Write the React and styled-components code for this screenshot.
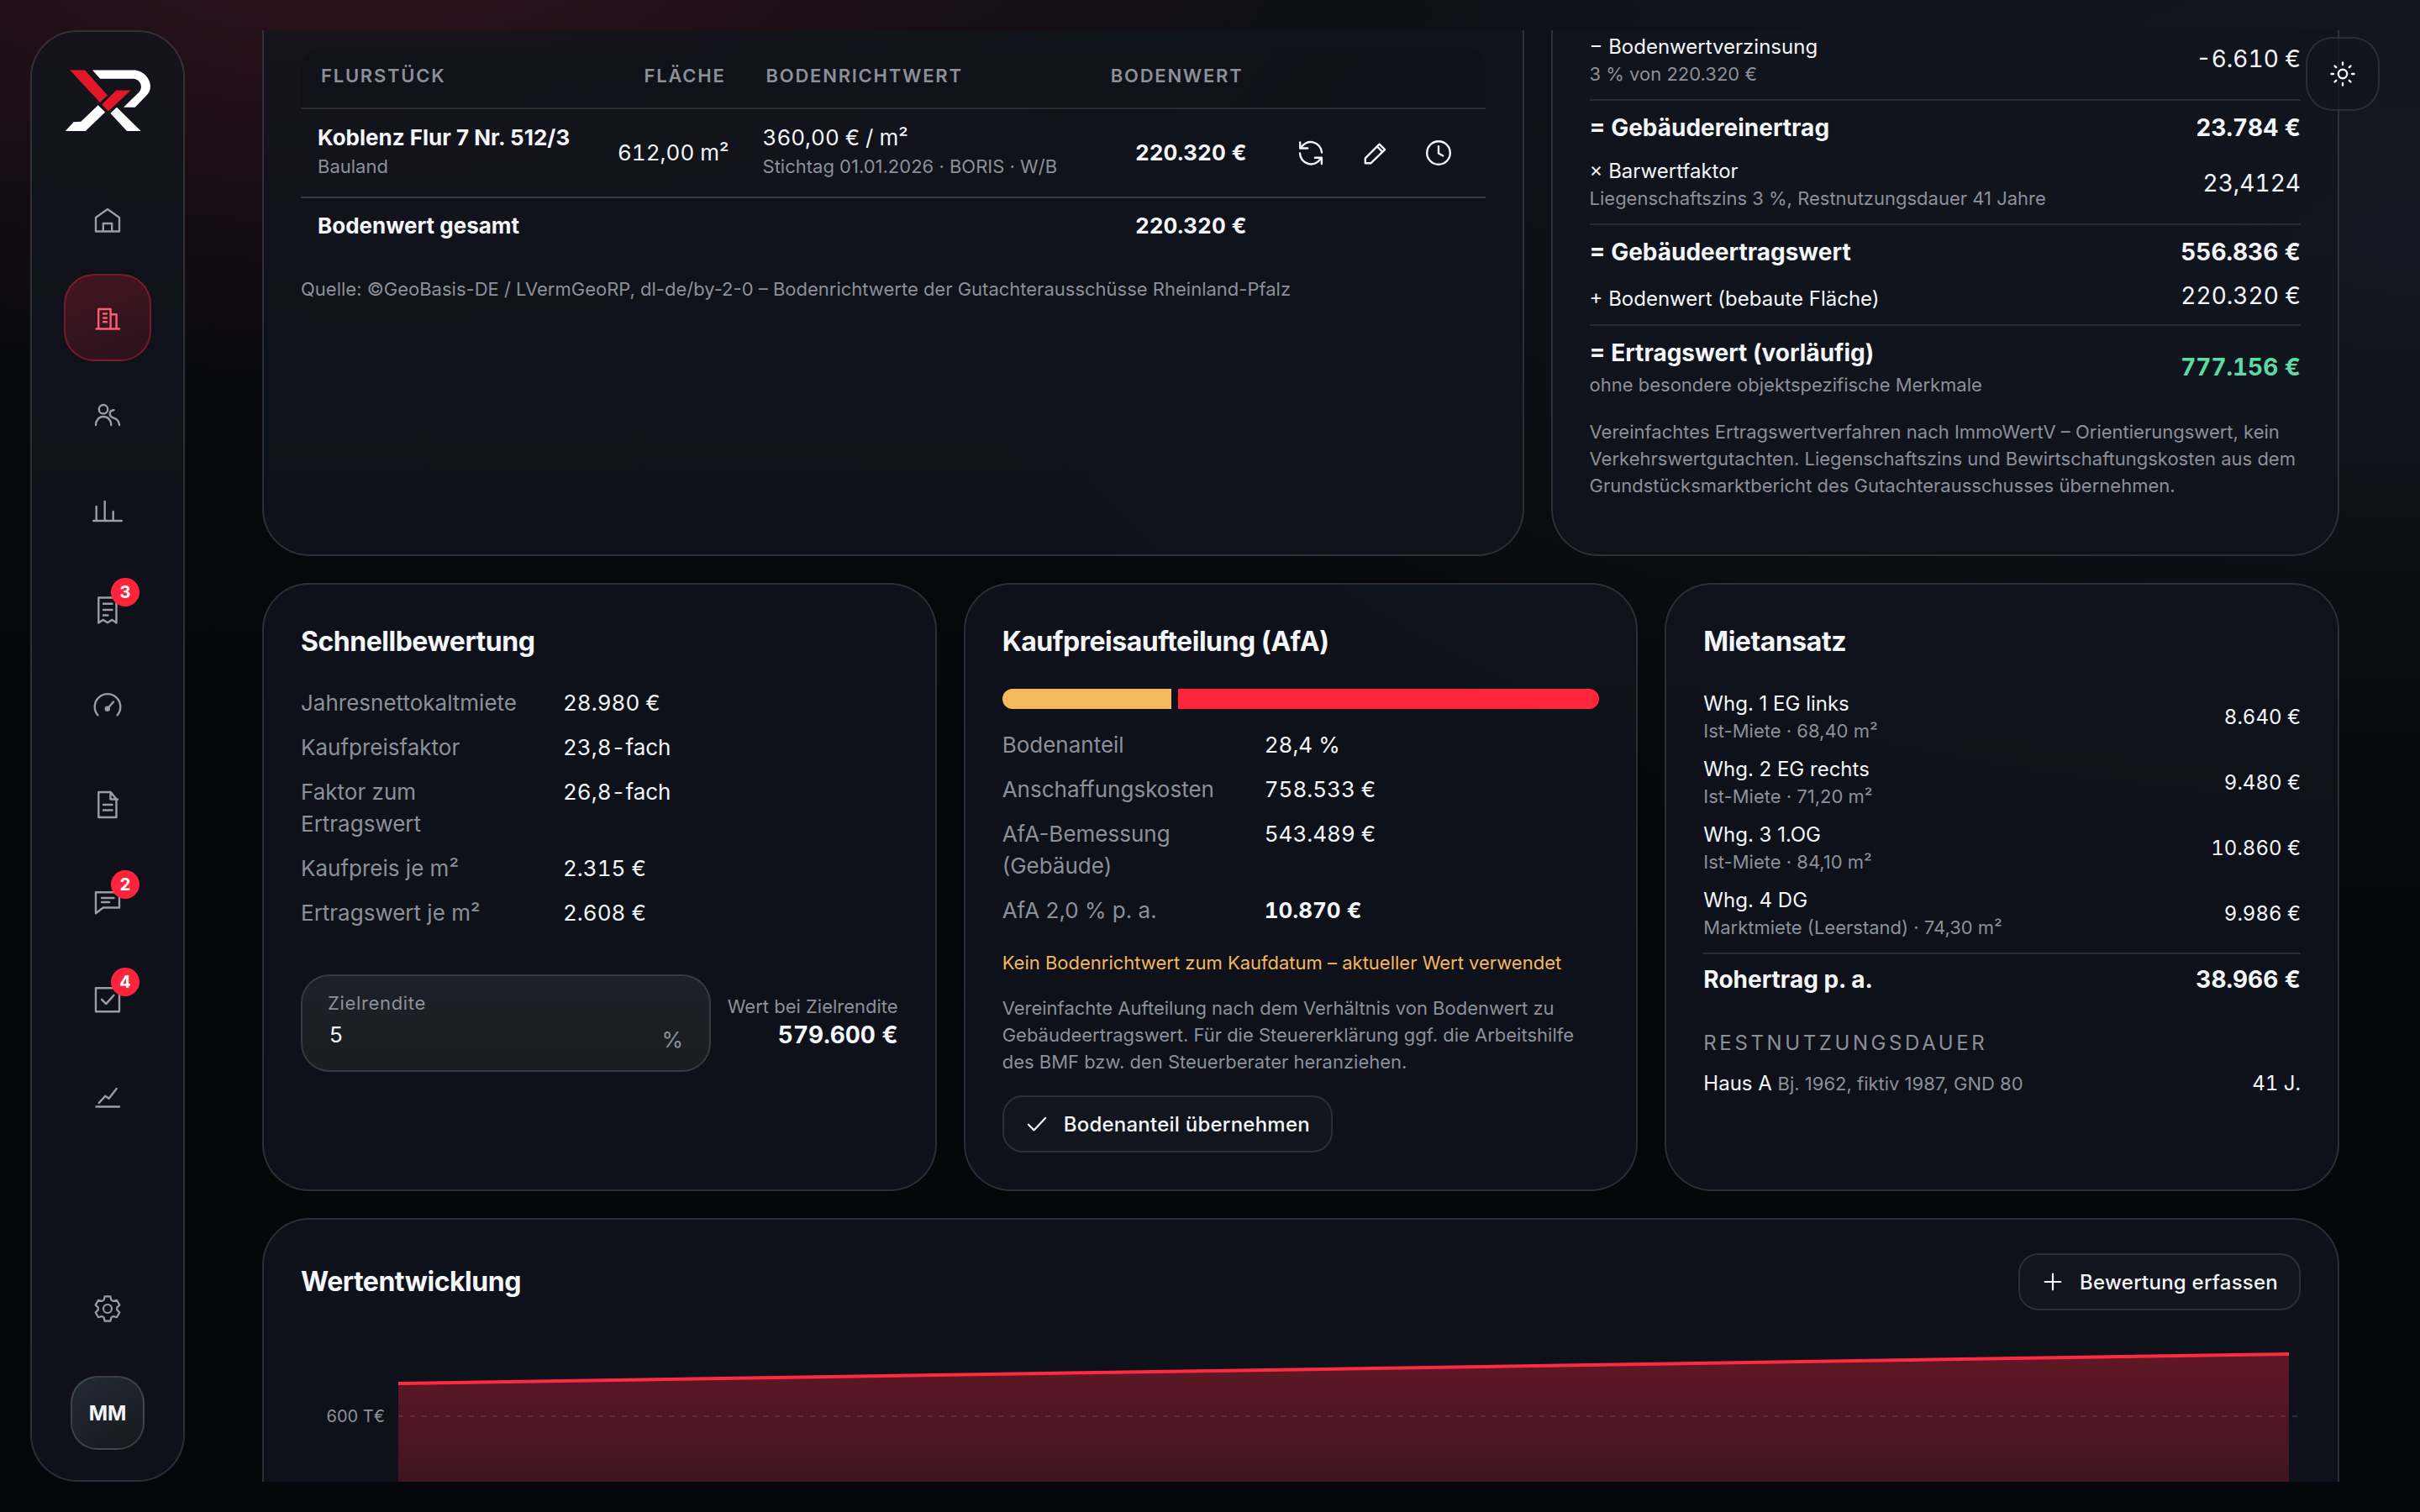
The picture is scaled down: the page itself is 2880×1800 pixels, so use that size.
import React, { useState } from 'react';
import styled, { createGlobalStyle, css } from 'styled-components';

const GlobalStyle = createGlobalStyle`
    * {
        box-sizing: border-box;
    }

    body {
        margin: 0;
        color: #f5f6fa;
        font-family: Inter, 'Liberation Sans', sans-serif;
        font-size: 26px;
        background:
            radial-gradient(42% 30% at 15% -4%, rgba(255, 40, 70, 0.15), transparent),
            radial-gradient(62% 46% at 100% 16%, rgba(96, 116, 160, 0.12), transparent),
            linear-gradient(#0a0d13, #050609 50%, #06070a);
    }

    button, input {
        font-family: inherit;
        color: inherit;
    }
`;

const Shell = styled.div`
    display: flex;
    gap: 92px;
    height: 100vh;
    padding: 36px;
    overflow: hidden;
`;

/* ---------- sidebar ---------- */

const Sidebar = styled.aside`
    display: flex;
    flex-direction: column;
    align-items: center;
    flex: none;
    width: 184px;
    padding: 44px 0 36px;
    border: 2px solid rgba(255, 255, 255, 0.13);
    border-radius: 56px;
    background: rgba(17, 21, 30, 0.78);
`;

const Logo = styled.a`
    display: block;
    height: 76px;
    margin-bottom: 52px;
`;

const Nav = styled.nav`
    display: flex;
    flex-direction: column;
    flex: 1;
    gap: 12px;
`;

const NavLink = styled.a`
    position: relative;
    display: flex;
    align-items: center;
    justify-content: center;
    width: 104px;
    height: 104px;
    border: 2px solid transparent;
    border-radius: 36px;
    color: #9a9da6;

    ${({ $active }) => $active && css`
        color: #ff5c72;
        border-color: rgba(255, 36, 60, 0.34);
        background: linear-gradient(160deg, rgba(255, 36, 60, 0.22), rgba(255, 36, 60, 0.11));
    `}
`;

const Badge = styled.span`
    position: absolute;
    top: 12px;
    right: 12px;
    display: flex;
    align-items: center;
    justify-content: center;
    width: 34px;
    height: 34px;
    border-radius: 50%;
    background: #ff243c;
    color: #fff;
    font-size: 20px;
    font-weight: 700;
    line-height: 34px;
`;

const Avatar = styled.button`
    width: 88px;
    height: 88px;
    margin-top: 28px;
    padding: 0;
    border: 2px solid rgba(255, 255, 255, 0.15);
    border-radius: 32px;
    background: linear-gradient(150deg, #232a35, #16181d);
    font-size: 24px;
    font-weight: 700;
`;

/* ---------- content ---------- */

const Viewport = styled.main`
    flex: 1;
    min-width: 0;
    margin-right: 60px;
    overflow: hidden;
`;

const Content = styled.div`
    display: flex;
    flex-direction: column;
    gap: 32px;
    margin-top: -52px;
`;

const Row = styled.div`
    display: grid;
    grid-template-columns: ${({ $columns }) => $columns};
    gap: 32px;
`;

const Card = styled.section`
    min-width: 0;
    padding: 44px;
    border: 2px solid rgba(255, 255, 255, 0.12);
    border-radius: 56px;
    background: rgba(17, 21, 30, 0.78);
`;

const CardHead = styled.div`
    display: flex;
    align-items: center;
    justify-content: space-between;
    height: 60px;
`;

const Title = styled.h2`
    margin: 0;
    font-size: 32px;
    font-weight: 700;
    line-height: 44px;
    letter-spacing: -0.015em;
`;

const CardTitle = styled(Title)`
    padding-top: 2px;
    margin-bottom: 32px;
`;

const Note = styled.p`
    margin: ${({ $margin }) => $margin || '0'};
    color: ${({ $warn }) => ($warn ? '#f5b85c' : '#8c9099')};
    font-size: 22px;
    line-height: 32px;
`;

const OutlineButton = styled.button`
    display: inline-flex;
    align-items: center;
    gap: 18px;
    height: 68px;
    padding: 0 25px;
    border: 2px solid rgba(255, 255, 255, 0.11);
    border-radius: 24px;
    background: rgba(255, 255, 255, 0.02);
    font-size: 24px;
    font-weight: 500;
    letter-spacing: 0.01em;
    white-space: nowrap;
`;

const ThemeButton = styled.button`
    position: fixed;
    top: 44px;
    right: 48px;
    display: flex;
    align-items: center;
    justify-content: center;
    width: 88px;
    height: 88px;
    padding: 0;
    border: 2px solid rgba(255, 255, 255, 0.11);
    border-radius: 32px;
    background: rgba(17, 20, 28, 0.7);
`;

/* ---------- land table ---------- */

const Table = styled.table`
    width: 100%;
    margin-top: 26px;
    border-collapse: separate;
    border-spacing: 0;
    table-layout: fixed;
`;

const Th = styled.th`
    height: 74px;
    padding: 0 24px 4px;
    border-bottom: 2px solid #2a2c34;
    background: rgba(16, 17, 25, 0.75);
    color: #8c9099;
    font-size: 22px;
    font-weight: 600;
    letter-spacing: 0.08em;
    text-align: ${({ $right }) => ($right ? 'right' : 'left')};
    text-transform: uppercase;

    &:first-child {
        border-top-left-radius: 28px;
    }

    &:last-child {
        border-top-right-radius: 28px;
    }
`;

const Td = styled.td`
    height: ${({ $total }) => ($total ? '66px' : '106px')};
    padding: 0 20px;
    border-bottom: ${({ $total }) => ($total ? '0' : '2px solid #3a3c45')};
    font-weight: ${({ $bold }) => ($bold ? 700 : 400)};
    font-variant-numeric: ${({ $text }) => ($text ? 'normal' : 'tabular-nums')};
    line-height: 32px;
    text-align: ${({ $right }) => ($right ? 'right' : 'left')};
    white-space: nowrap;
`;

const TdSub = styled.div`
    color: #8c9099;
    font-size: 22px;
    font-weight: 400;
    font-variant-numeric: normal;
    line-height: 36px;
`;

const Actions = styled.div`
    display: flex;
    justify-content: flex-end;
    gap: 4px;
`;

const IconButton = styled.button`
    display: flex;
    align-items: center;
    justify-content: center;
    width: 72px;
    height: 64px;
    padding: 0;
    border: 0;
    background: none;
`;

/* ---------- calculation rows ---------- */

const Calc = styled.div`
    display: flex;
    align-items: center;
    justify-content: space-between;
    padding: ${({ $compact }) => ($compact ? '4px 0 10px' : '10px 0 14px')};
    font-size: 24px;
    line-height: 32px;
`;

const CalcSum = styled(Calc)`
    margin-top: ${({ $compact }) => ($compact ? 4 : 0)}px;
    padding: ${({ $compact }) => ($compact ? 14 : 16)}px 0 10px;
    border-top: 2px solid #292c33;
    font-size: 28px;
    font-weight: 700;
`;

const CalcLabel = styled.div`
    padding: ${({ $single }) => ($single ? '4px 0 0' : '0')};
`;

const CalcSub = styled.div`
    margin-top: ${({ $gap }) => $gap || 0}px;
    color: #8c9099;
    font-size: 22px;
    font-weight: 400;
`;

const CalcValue = styled.span`
    padding-bottom: ${({ $compact }) => ($compact ? 0 : 4)}px;
    color: ${({ $good }) => ($good ? '#5cdca5' : 'inherit')};
    font-size: ${({ $compact }) => ($compact ? 'inherit' : '28px')};
    font-variant-numeric: tabular-nums;
    white-space: nowrap;
`;

const Overline = styled.h3`
    margin: 34px 0 12px;
    color: #8c9099;
    font-size: 24px;
    font-weight: 400;
    line-height: 32px;
    letter-spacing: 0.15em;
    text-transform: uppercase;
`;

const Muted = styled.span`
    color: #8c9099;
    font-size: 22px;
`;

/* ---------- key figures ---------- */

const Facts = styled.dl`
    display: grid;
    grid-template-columns: 280px 1fr;
    gap: 15px 32px;
    margin: 0;
    line-height: 38px;

    dt {
        color: #8c9099;
    }

    dd {
        margin: 0;
        font-variant-numeric: tabular-nums;
    }
`;

const Yield = styled.div`
    display: flex;
    align-items: center;
    gap: 20px;
    margin-top: 54px;
`;

const Field = styled.label`
    display: grid;
    grid-template-columns: 1fr auto;
    flex: 1;
    min-width: 0;
    height: 116px;
    padding: 16px 30px;
    border: 2px solid rgba(255, 255, 255, 0.12);
    border-radius: 34px;
    background: linear-gradient(#1d2029, #1b1d21);
    color: #8c9099;
    font-size: 22px;
    line-height: 32px;
    letter-spacing: 0.03em;
`;

const FieldInput = styled.input`
    grid-row: 2;
    width: 100%;
    height: 34px;
    padding: 0 2px;
    border: 0;
    outline: 0;
    background: none;
    color: #f5f6fa;
    font-size: 26px;
`;

const FieldUnit = styled.span`
    grid-row: 2;
    padding-top: 8px;
    font-size: 26px;
`;

const YieldResult = styled.div`
    padding-bottom: 4px;
    color: #8c9099;
    font-size: 22px;
    line-height: 32px;
    text-align: right;
    white-space: nowrap;

    strong {
        display: block;
        color: #f5f6fa;
        font-size: 28px;
        line-height: 36px;
        font-variant-numeric: tabular-nums;
    }
`;

const Split = styled.div`
    display: flex;
    gap: 8px;
    height: 24px;
    margin: 34px 0 24px;
    border-radius: 12px;
    overflow: hidden;
`;

const SplitLand = styled.div`
    background: #f5b85c;
`;

const SplitBuilding = styled.div`
    flex: 1;
    background: #ff263c;
`;

/* ---------- chart ---------- */

const Chart = styled.div`
    display: flex;
    height: 320px;
    margin-top: 40px;
`;

const Axis = styled.div`
    width: 116px;
    padding: 78px 16px 0 0;
    color: #8c9099;
    font-size: 20px;
    line-height: 24px;
    text-align: right;
`;

const Plot = styled.svg`
    flex: 1;
    min-width: 0;
    height: 320px;
`;

const Icon = ({ size = 36, width = 2.4, children }) => (
    <svg
        width={size}
        height={size}
        viewBox="0 0 36 36"
        fill="none"
        stroke="currentColor"
        strokeWidth={width}
        strokeLinecap="round"
        strokeLinejoin="round"
        aria-hidden="true"
    >
        {children}
    </svg>
);

const navItems = [
    { label: 'Start', icon: <path d="M4 31.5V15L18 5l14 10v16.500zM12.800 31.500V22h10.400v9.500" /> },
    {
        label: 'Objekte',
        active: true,
        icon: <path d="M4.500 31.500h27.500M7.200 31.500V8h14.400v23.500M21.600 14.300h7v17.200M13 13.500h4M13 18.500h4M13 23.300h4" />,
    },
    {
        label: 'Mieter',
        icon: (
            <>
                <circle cx="13" cy="11.200" r="5.200" />
                <path d="M4 30c0-5.800 3.900-10 9.100-10s9.200 4.200 9.200 10M25.600 12.200c-3 .2-4.900 2-4.900 4.300 0 2.500 2 4.300 4.700 5.100 3.800 1 6.200 4 6.700 8.400" />
            </>
        ),
    },
    { label: 'Berichte', icon: <path d="M1.200 28h33.600M4.700 28V11M14.700 28V5M24.700 28V17" /> },
    {
        label: 'Rechnungen',
        badge: 3,
        icon: <path d="M7.300 3.500h21.200v30l-5-3.600-5.500 3.300-5.500-3.300-5.200 3.600zM13 10.800h10.500M13 18h10.500M13 24.500h5.500" />,
    },
    {
        label: 'Zähler',
        icon: (
            <>
                <path d="M6.300 27.300a15.300 15.300 0 1 1 23.400 0M25 11.500l-7 8" />
                <circle cx="17.800" cy="19.800" r="2" fill="currentColor" />
            </>
        ),
    },
    { label: 'Dokumente', icon: <path d="M7.300 3h14.500l6.700 8.500V33H7.300zM21.500 3.500v8H30M13 18h10.500M13 24.500h10.500" /> },
    { label: 'Nachrichten', badge: 2, icon: <path d="M4 6.200h28v18.300H12.800L4 31.300zM11 13h14.500M11 18h9" /> },
    { label: 'Aufgaben', badge: 4, icon: <path d="M4 4.200h28v28H4zM11 17.800l5.300 5.300 9.200-10.300" /> },
    { label: 'Wertentwicklung', icon: <path d="M4.500 29.500h27.500M7.800 25l7.500-8.300 4.300 3L28.700 8" /> },
];

const facts = [
    ['Jahresnettokaltmiete', '28.980 €'],
    ['Kaufpreisfaktor', '23,8-fach'],
    ['Faktor zum Ertragswert', '26,8-fach'],
    ['Kaufpreis je m²', '2.315 €'],
    ['Ertragswert je m²', '2.608 €'],
];

const rents = [
    ['Whg. 1 EG links', 'Ist-Miete · 68,40 m²', '8.640 €'],
    ['Whg. 2 EG rechts', 'Ist-Miete · 71,20 m²', '9.480 €'],
    ['Whg. 3 1.OG', 'Ist-Miete · 84,10 m²', '10.860 €'],
    ['Whg. 4 DG', 'Marktmiete (Leerstand) · 74,30 m²', '9.986 €'],
];

const SidebarNav = () => (
    <Sidebar>
        <Logo href="#" aria-label="XR">
            <svg width="104" height="76" viewBox="0 0 104 76" aria-hidden="true">
                <g fill="#e31827">
                    <path d="M7.300 1.400H25l27 30.100-9 8.400z" />
                    <path d="M62.300 25.500h17.400L53 50.500l-7.700-8.300z" />
                </g>
                <g fill="#fff">
                    <path d="M34 1.400h49.300c10 0 19.700 9.200 19.700 19.400 0 5-2 8.400-5.500 11.700L84.700 45.700H71l18.400-18c5.600-5.800 1.600-16-7.400-16H43.200z" />
                    <path d="M40.700 43.300l8.500 8.300L25.700 74h-24l10-10.800 8.600-.4z" />
                    <path d="M63 45.700L91.700 74H75L55.300 52.800z" />
                </g>
            </svg>
        </Logo>
        <Nav>
            {navItems.map((item) => (
                <NavLink href="#" key={item.label} aria-label={item.label} $active={item.active}>
                    <Icon>{item.icon}</Icon>
                    {item.badge && <Badge>{item.badge}</Badge>}
                </NavLink>
            ))}
        </Nav>
        <NavLink href="#" aria-label="Einstellungen">
            <Icon width={2.2}>
                <path
                    transform="translate(18 18)"
                    d="M-3.400-14.600H3.400L4.400-10.400 6.800-9 10.900-10.200 14.300-4.400 11.200-1.400V1.400L14.300 4.400 10.900 10.200 6.800 9 4.400 10.400 3.400 14.600H-3.400L-4.400 10.400-6.800 9-10.900 10.200-14.300 4.400-11.200 1.400V-1.400L-14.300-4.400-10.900-10.200-6.800-9-4.400-10.400z"
                />
                <circle cx="18" cy="18" r="5" />
            </Icon>
        </NavLink>
        <Avatar>MM</Avatar>
    </Sidebar>
);

const LandCard = () => (
    <Card>
        <Table>
            <colgroup>
                <col />
                <col width="180" />
                <col width="338" />
                <col width="278" />
                <col width="264" />
            </colgroup>
            <thead>
                <tr>
                    <Th>Flurstück</Th>
                    <Th $right>Fläche</Th>
                    <Th>Bodenrichtwert</Th>
                    <Th $right>Bodenwert</Th>
                    <Th as="td" />
                </tr>
            </thead>
            <tbody>
                <tr>
                    <Td $bold $text>
                        Koblenz Flur 7 Nr. 512/3
                        <TdSub>Bauland</TdSub>
                    </Td>
                    <Td $right>612,00 m²</Td>
                    <Td>
                        360,00 € / m²
                        <TdSub>Stichtag 01.01.2026 · BORIS · W/B</TdSub>
                    </Td>
                    <Td $bold $right>220.320 €</Td>
                    <Td>
                        <Actions>
                            <IconButton aria-label="Aktualisieren">
                                <Icon>
                                    <path d="M5.200 5.500v7h9M6.200 12A13.200 13.200 0 0 1 31 17.500M30.900 31v-7.200h-8M5 18.500A13.200 13.200 0 0 0 29.800 24.500" />
                                </Icon>
                            </IconButton>
                            <IconButton aria-label="Bearbeiten">
                                <Icon>
                                    <path d="M6.800 30.300v-6L23.600 7.700l6.500 6.500L13.300 30.300zM21 10.500l6.300 6.300" />
                                </Icon>
                            </IconButton>
                            <IconButton aria-label="Verlauf">
                                <Icon>
                                    <circle cx="18" cy="18" r="13.800" />
                                    <path d="M18 10.200v8.300l5.300 3" />
                                </Icon>
                            </IconButton>
                        </Actions>
                    </Td>
                </tr>
            </tbody>
            <tfoot>
                <tr>
                    <Td $total $bold $text colSpan={3}>Bodenwert gesamt</Td>
                    <Td $total $bold $right>220.320 €</Td>
                    <Td $total />
                </tr>
            </tfoot>
        </Table>
        <Note $margin="26px 0 0">
            Quelle: ©GeoBasis-DE / LVermGeoRP, dl-de/by-2-0 – Bodenrichtwerte der Gutachterausschüsse Rheinland-Pfalz
        </Note>
    </Card>
);

const IncomeCard = () => (
    <Card>
        <Calc>
            <CalcLabel>
                − Bodenwertverzinsung
                <CalcSub>3 % von 220.320 €</CalcSub>
            </CalcLabel>
            <CalcValue>-6.610 €</CalcValue>
        </Calc>
        <CalcSum>
            <span>= Gebäudereinertrag</span>
            <CalcValue $compact>23.784 €</CalcValue>
        </CalcSum>
        <Calc>
            <CalcLabel>
                × Barwertfaktor
                <CalcSub>Liegenschaftszins 3 %, Restnutzungsdauer 41 Jahre</CalcSub>
            </CalcLabel>
            <CalcValue>23,4124</CalcValue>
        </Calc>
        <CalcSum>
            <span>= Gebäudeertragswert</span>
            <CalcValue $compact>556.836 €</CalcValue>
        </CalcSum>
        <Calc>
            <CalcLabel $single>+ Bodenwert (bebaute Fläche)</CalcLabel>
            <CalcValue>220.320 €</CalcValue>
        </Calc>
        <CalcSum>
            <CalcLabel>
                = Ertragswert (vorläufig)
                <CalcSub $gap={6}>ohne besondere objektspezifische Merkmale</CalcSub>
            </CalcLabel>
            <CalcValue $good>777.156 €</CalcValue>
        </CalcSum>
        <Note $margin="14px 0 22px">
            Vereinfachtes Ertragswertverfahren nach ImmoWertV – Orientierungswert, kein Verkehrswertgutachten.
            Liegenschaftszins und Bewirtschaftungskosten aus dem Grundstücksmarktbericht des Gutachterausschusses
            übernehmen.
        </Note>
    </Card>
);

const QuickCard = () => {
    const [target, setTarget] = useState('5');

    return (
        <Card>
            <CardTitle>Schnellbewertung</CardTitle>
            <Facts>
                {facts.map(([label, value]) => (
                    <React.Fragment key={label}>
                        <dt>{label}</dt>
                        <dd>{value}</dd>
                    </React.Fragment>
                ))}
            </Facts>
            <Yield>
                <Field>
                    Zielrendite
                    <FieldInput value={target} onChange={(e) => setTarget(e.target.value)} />
                    <FieldUnit>%</FieldUnit>
                </Field>
                <YieldResult>
                    Wert bei Zielrendite
                    <strong>579.600 €</strong>
                </YieldResult>
            </Yield>
        </Card>
    );
};

const SplitCard = ({ share = 28.4 }) => (
    <Card>
        <CardTitle>Kaufpreisaufteilung (AfA)</CardTitle>
        <Split>
            <SplitLand style={{ width: `${share}%` }} />
            <SplitBuilding />
        </Split>
        <Facts>
            <dt>Bodenanteil</dt>
            <dd>28,4 %</dd>
            <dt>Anschaffungskosten</dt>
            <dd>758.533 €</dd>
            <dt>AfA-Bemessung (Gebäude)</dt>
            <dd>543.489 €</dd>
            <dt>AfA 2,0 % p. a.</dt>
            <dd><strong>10.870 €</strong></dd>
        </Facts>
        <Note $warn $margin="27px 0 22px">Kein Bodenrichtwert zum Kaufdatum – aktueller Wert verwendet</Note>
        <Note $margin="0 0 24px">
            Vereinfachte Aufteilung nach dem Verhältnis von Bodenwert zu Gebäudeertragswert. Für die Steuererklärung
            ggf. die Arbeitshilfe des BMF bzw. den Steuerberater heranziehen.
        </Note>
        <OutlineButton>
            <Icon size={28} width={2.8}>
                <path d="M5 19l8.500 8.500L31 9" />
            </Icon>
            Bodenanteil übernehmen
        </OutlineButton>
    </Card>
);

const RentCard = () => (
    <Card>
        <CardTitle>Mietansatz</CardTitle>
        {rents.map(([unit, detail, value]) => (
            <Calc key={unit} $compact>
                <CalcLabel>
                    {unit}
                    <CalcSub>{detail}</CalcSub>
                </CalcLabel>
                <CalcValue $compact>{value}</CalcValue>
            </Calc>
        ))}
        <CalcSum $compact>
            <span>Rohertrag p. a.</span>
            <CalcValue $compact>38.966 €</CalcValue>
        </CalcSum>
        <Overline>Restnutzungsdauer</Overline>
        <Calc $compact>
            <span>
                Haus A <Muted>Bj. 1962, fiktiv 1987, GND 80</Muted>
            </span>
            <CalcValue $compact>41 J.</CalcValue>
        </Calc>
    </Card>
);

const TrendCard = () => (
    <Card>
        <CardHead>
            <Title>Wertentwicklung</Title>
            <OutlineButton>
                <Icon size={28} width={2.8}>
                    <path d="M18 6v24M6 18h24" />
                </Icon>
                Bewertung erfassen
            </OutlineButton>
        </CardHead>
        <Chart>
            <Axis>600 T€</Axis>
            <Plot viewBox="0 0 2264 320" preserveAspectRatio="none">
                <defs>
                    <linearGradient id="trend" gradientUnits="userSpaceOnUse" x1="0" y1="16" x2="0" y2="376">
                        <stop offset="0" stopColor="#ff243c" stopOpacity="0.34" />
                        <stop offset="1" stopColor="#ff243c" stopOpacity="0.02" />
                    </linearGradient>
                </defs>
                <path
                    d="M0 90H2260"
                    stroke="rgba(255, 255, 255, 0.12)"
                    strokeWidth="2"
                    strokeDasharray="6 8"
                    vectorEffect="non-scaling-stroke"
                />
                <path d="M0 51L2250 16V320H0z" fill="url(#trend)" />
                <path d="M0 51L2250 16" stroke="#ff2a41" strokeWidth="4" vectorEffect="non-scaling-stroke" />
            </Plot>
        </Chart>
    </Card>
);

const App = () => (
    <>
        <GlobalStyle />
        <Shell>
            <SidebarNav />
            <Viewport>
                <Content>
                    <Row $columns="8fr 5fr">
                        <LandCard />
                        <IncomeCard />
                    </Row>
                    <Row $columns="repeat(3, 1fr)">
                        <QuickCard />
                        <SplitCard />
                        <RentCard />
                    </Row>
                    <TrendCard />
                </Content>
            </Viewport>
        </Shell>
        <ThemeButton aria-label="Helles Design">
            <Icon>
                <circle cx="18" cy="18" r="5.200" />
                <path d="M18 4.500v2.500M18 29v2.500M4.500 18h2.500M29 18h2.500M8.500 8.500l1.700 1.700M25.800 25.800l1.700 1.700M8.500 27.500l1.700-1.700M25.800 10.200l1.700-1.700" />
            </Icon>
        </ThemeButton>
    </>
);

export default App;
